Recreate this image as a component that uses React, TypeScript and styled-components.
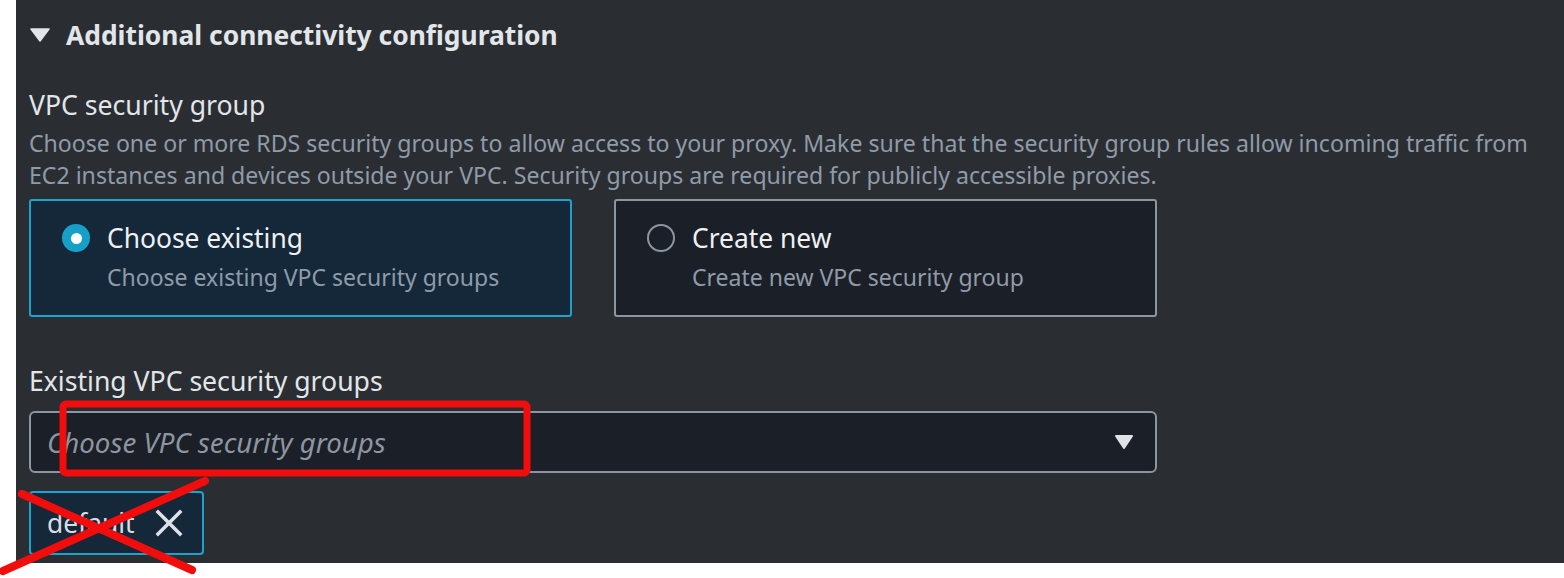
import React from "react";
import styled, { createGlobalStyle } from "styled-components";

const GlobalStyle = createGlobalStyle`
  html, body { margin: 0; padding: 0; background: #ffffff; }
  body { font-family: "Noto Sans", "Open Sans", sans-serif; }
  * { box-sizing: border-box; }
`;

const Page = styled.div`
  position: relative;
  width: 1564px;
  height: 578px;
  padding-left: 16px;
  overflow: hidden;
`;

const Panel = styled.section`
  width: 1548px;
  height: 563px;
  background: #2a2e33;
  padding: 17px 0 0 13px;
  display: flex;
  flex-direction: column;
`;

const Header = styled.div`
  display: flex;
  align-items: center;
  height: 36px;
  gap: 16px;
  padding-left: 1px;
`;

const Caret = styled.svg`
  width: 20px;
  height: 14px;
  flex: none;
`;

const HeaderTitle = styled.h2`
  margin: 0;
  font-size: 26.4px;
  font-weight: 700;
  line-height: 36px;
  color: #e3e6e9;
`;

const Label = styled.div<{ $mt: number }>`
  margin-top: ${(p) => p.$mt}px;
  font-size: 26.6px;
  line-height: 36px;
  color: #e3e6e9;
`;

const Description = styled.p`
  margin: 4px 0 0;
  width: 1520px;
  font-size: 23.1px;
  line-height: 32px;
  color: #909ba8;
`;

const Tiles = styled.div`
  display: grid;
  grid-template-columns: 543px 543px;
  gap: 42px;
  margin-top: 8px;
`;

const Tile = styled.div<{ $selected?: boolean }>`
  height: 118px;
  border: 2px solid ${(p) => (p.$selected ? "#1aa3cc" : "#8d96a0")};
  border-radius: 3px;
  background: ${(p) => (p.$selected ? "#14283a" : "#1b1f27")};
  padding: 19px 0 0 31px;
  display: grid;
  grid-template-columns: 28px 1fr;
  column-gap: 17px;
  align-content: start;
`;

const Radio = styled.span<{ $checked?: boolean }>`
  width: 28px;
  height: 28px;
  margin-top: 4px;
  border-radius: 50%;
  display: flex;
  align-items: center;
  justify-content: center;
  background: ${(p) => (p.$checked ? "#16a0c8" : "transparent")};
  border: ${(p) => (p.$checked ? "none" : "2px solid #8d96a0")};
  &::after {
    content: "";
    display: ${(p) => (p.$checked ? "block" : "none")};
    width: 11px;
    height: 11px;
    border-radius: 50%;
    background: #ffffff;
  }
`;

const TileText = styled.div`
  display: flex;
  flex-direction: column;
  gap: 5px;
`;

const TileTitle = styled.div`
  font-size: 26.4px;
  line-height: 36px;
  color: #eef0f2;
`;

const TileSub = styled.div`
  font-size: 23px;
  line-height: 32px;
  color: #909ba8;
`;

const Select = styled.div`
  margin-top: 12px;
  width: 1128px;
  height: 62px;
  border: 2px solid #8d96a0;
  border-radius: 6px;
  background: #1b1f27;
  display: flex;
  align-items: center;
  justify-content: space-between;
  padding: 0 21px 0 16px;
`;

const Placeholder = styled.span`
  font-size: 27.7px;
  font-style: italic;
  color: #8d96a0;
  line-height: 36px;
`;

const SelectCaret = styled.svg`
  width: 20px;
  height: 16px;
  flex: none;
`;

const Token = styled.div`
  margin-top: 18px;
  width: 175px;
  height: 64px;
  border: 2px solid #1aa3cc;
  border-radius: 4px;
  background: #14283a;
  display: flex;
  align-items: center;
  padding: 0 0 0 16px;
  gap: 20px;
`;

const TokenText = styled.span`
  font-size: 26.4px;
  line-height: 36px;
  color: #d9dde2;
`;

const CloseIcon = styled.svg`
  width: 28px;
  height: 28px;
  flex: none;
`;

const Annotations = styled.svg`
  position: absolute;
  left: 0;
  top: 0;
  width: 1564px;
  height: 578px;
  pointer-events: none;
`;

export default function App() {
  return (
    <Page>
      <GlobalStyle />
      <Panel>
        <Header>
          <Caret viewBox="0 0 20 14">
            <path d="M1 1 H19 L10 13 Z" fill="#e3e6e9" stroke="#e3e6e9" strokeWidth="1.5" strokeLinejoin="round" />
          </Caret>
          <HeaderTitle>Additional connectivity configuration</HeaderTitle>
        </Header>

        <Label $mt={34}>VPC security group</Label>
        <Description>
          Choose one or more RDS security groups to allow access to your proxy. Make sure that the security group rules allow incoming traffic from EC2 instances and devices outside your VPC. Security groups are required for publicly accessible proxies.
        </Description>

        <Tiles>
          <Tile $selected>
            <Radio $checked />
            <TileText>
              <TileTitle>Choose existing</TileTitle>
              <TileSub>Choose existing VPC security groups</TileSub>
            </TileText>
          </Tile>
          <Tile>
            <Radio />
            <TileText>
              <TileTitle>Create new</TileTitle>
              <TileSub>Create new VPC security group</TileSub>
            </TileText>
          </Tile>
        </Tiles>

        <Label $mt={46}>Existing VPC security groups</Label>
        <Select>
          <Placeholder>Choose VPC security groups</Placeholder>
          <SelectCaret viewBox="0 0 20 16">
            <path d="M2 2 H18 L10 14 Z" fill="#dfe3e8" stroke="#dfe3e8" strokeWidth="2" strokeLinejoin="round" />
          </SelectCaret>
        </Select>

        <Token>
          <TokenText>default</TokenText>
          <CloseIcon viewBox="0 0 28 28">
            <path d="M3 3 L25 25 M25 3 L3 25" stroke="#dfe3e8" strokeWidth="3.5" strokeLinecap="square" />
          </CloseIcon>
        </Token>
      </Panel>

      <Annotations viewBox="0 0 1564 578">
        <rect x="63" y="404" width="464" height="69" rx="3" fill="none" stroke="#f20d0d" strokeWidth="7" />
        <line x1="3" y1="571" x2="205" y2="481" stroke="#f20d0d" strokeWidth="8" strokeLinecap="round" />
        <line x1="22" y1="494" x2="192" y2="570" stroke="#f20d0d" strokeWidth="8" strokeLinecap="round" />
      </Annotations>
    </Page>
  );
}
